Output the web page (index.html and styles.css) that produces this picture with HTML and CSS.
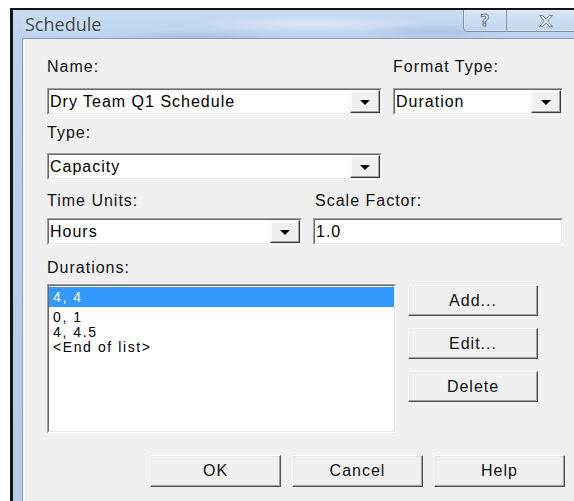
FILE: index.html
```html
<!DOCTYPE html>
<html lang="en">
<head>
<meta charset="utf-8">
<title>Schedule</title>
<link rel="stylesheet" href="styles.css">
</head>
<body>
<div class="window">
  <div class="titlebar">
    <span class="title">Schedule</span>
    <div class="caption-buttons">
      <span class="cap-btn help">?</span>
      <span class="cap-btn close">
        <svg width="16" height="14" viewBox="0 0 16 14" aria-hidden="true">
          <path d="M1.5 1.5h3.2L8 5.2l3.3-3.7h3.2L9.6 7l4.9 5.5h-3.2L8 8.8l-3.3 3.7H1.5L6.4 7z" fill="#eef3fa" stroke="#6f7f96" stroke-width="1" stroke-linejoin="round"/>
        </svg>
      </span>
    </div>
  </div>
  <div class="frame">
    <div class="client">
      <div class="row row-name">
        <div class="field col-name">
          <div class="lbl">Name:</div>
          <div class="combo">
            <div class="combo-inner">
              <span class="combo-text">Dry Team Q1 Schedule</span>
              <span class="drop"><i class="arrow"></i></span>
            </div>
          </div>
        </div>
        <div class="field col-format">
          <div class="lbl">Format Type:</div>
          <div class="combo">
            <div class="combo-inner">
              <span class="combo-text">Duration</span>
              <span class="drop"><i class="arrow"></i></span>
            </div>
          </div>
        </div>
      </div>

      <div class="row row-type">
        <div class="field col-name">
          <div class="lbl">Type:</div>
          <div class="combo">
            <div class="combo-inner">
              <span class="combo-text">Capacity</span>
              <span class="drop"><i class="arrow"></i></span>
            </div>
          </div>
        </div>
      </div>

      <div class="row row-units">
        <div class="field col-units">
          <div class="lbl">Time Units:</div>
          <div class="combo">
            <div class="combo-inner">
              <span class="combo-text">Hours</span>
              <span class="drop"><i class="arrow"></i></span>
            </div>
          </div>
        </div>
        <div class="field col-scale">
          <div class="lbl lbl-scale">Scale Factor:</div>
          <div class="combo">
            <div class="combo-inner">
              <span class="combo-text">1.0</span>
            </div>
          </div>
        </div>
      </div>

      <div class="row-durations">
        <div class="lbl">Durations:</div>
        <div class="durations-body">
          <div class="listbox">
            <div class="listbox-inner">
              <div class="item sel">4, 4</div>
              <div class="item">0, 1</div>
              <div class="item">4, 4.5</div>
              <div class="item">&lt;End of list&gt;</div>
            </div>
          </div>
          <div class="side-buttons">
            <button class="btn">Add...</button>
            <button class="btn">Edit...</button>
            <button class="btn">Delete</button>
          </div>
        </div>
      </div>

      <div class="actions">
        <button class="btn">OK</button>
        <button class="btn">Cancel</button>
        <button class="btn">Help</button>
      </div>
    </div>
  </div>
</div>
</body>
</html>
```

FILE: styles.css
```css
html, body {
  margin: 0;
  padding: 0;
  width: 574px;
  height: 501px;
  overflow: hidden;
  background: #ffffff;
}

/* dialog window with an Aero-style glass frame */
.window {
  margin: 8px 0 0 10px;
  width: 580px;
  height: 491px;
  border-top: 2px solid #151515;
  border-left: 3px solid #151515;
  display: flex;
  flex-direction: column;
  background:
    radial-gradient(ellipse 90px 10px at 180px 30px, rgba(140, 165, 200, 0.55), transparent),
    radial-gradient(ellipse 70px 8px at 420px 22px, rgba(150, 175, 210, 0.5), transparent),
    radial-gradient(ellipse 120px 9px at 300px 14px, rgba(255, 255, 255, 0.45), transparent),
    linear-gradient(to bottom, #c8dbf2 0, #bcd2ee 28px, #b3cbea 100%);
}

.titlebar {
  height: 28px;
  display: flex;
  align-items: flex-start;
  padding-left: 12px;
}

.title {
  font-family: "Open Sans", "Noto Sans", sans-serif;
  font-size: 18px;
  line-height: 28px;
  color: #3e4652;
  text-shadow: 0 0 6px rgba(255, 255, 255, 0.8);
}

.caption-buttons {
  margin-left: auto;
  margin-right: 13px;
  display: flex;
  height: 21px;
  border: 1px solid #7d8ea6;
  border-top: none;
  border-radius: 0 0 5px 5px;
  background: linear-gradient(to bottom, rgba(230, 238, 248, 0.5), rgba(200, 216, 238, 0.4));
  box-shadow: inset 0 0 0 1px rgba(255, 255, 255, 0.35);
}

.cap-btn {
  display: flex;
  align-items: center;
  justify-content: center;
}

.cap-btn.help {
  width: 42px;
  border-right: 1px solid #8797ae;
  font-family: "DejaVu Sans", sans-serif;
  font-weight: bold;
  font-size: 16px;
  color: #f1f5fb;
  -webkit-text-stroke: 1px #6f7f96;
}

.cap-btn.close {
  width: 72px;
  justify-content: flex-start;
  padding-left: 31px;
  box-sizing: border-box;
}

.frame {
  flex: 1;
  display: flex;
  padding-left: 9px;
}

.client {
  flex: 1;
  border-left: 1px solid #8798b0;
  border-top: 1px solid #8798b0;
  background: #f0f0f0;
  padding: 19px 0 0 24px;
  box-shadow: inset 2px 0 0 #f6f8fb;
  font-family: "Liberation Sans", Arial, sans-serif;
  font-size: 16px;
  letter-spacing: 1px;
  color: #111;
}

.row {
  display: flex;
  gap: 11px;
}

.lbl {
  height: 18px;
  line-height: 18px;
  white-space: nowrap;
}

.col-name { width: 335px; }
.col-format { width: 170px; }
.col-units { width: 255px; }
.col-scale { width: 250px; }

.lbl-scale { padding-left: 2px; }

.row-name .lbl { margin-bottom: 12px; }
.row-type { margin-top: 9px; }
.row-type .lbl { margin-bottom: 11px; }
.row-units { margin-top: 12px; }
.row-units .lbl { margin-bottom: 8px; }
.row-durations { margin-top: 14px; }
.row-durations > .lbl { margin-bottom: 7px; }

/* sunken edit / combo box */
.combo {
  height: 27px;
  box-sizing: border-box;
  border: 1px solid;
  border-color: #a0a0a0 #ffffff #ffffff #a0a0a0;
}

.combo-inner {
  height: 100%;
  box-sizing: border-box;
  border: 1px solid;
  border-color: #6a6a6a #e6e6e6 #e6e6e6 #6a6a6a;
  background: #ffffff;
  display: flex;
  align-items: center;
}

.combo-text {
  flex: 1;
  padding-left: 1px;
  line-height: 18px;
  color: #000;
  white-space: nowrap;
  overflow: hidden;
}

.drop {
  width: 30px;
  height: 100%;
  box-sizing: border-box;
  border: 1px solid;
  border-color: #f4f4f4 #404040 #404040 #f4f4f4;
  box-shadow: inset -1px -1px 0 #a0a0a0, inset 1px 1px 0 #ffffff;
  background: #f0f0f0;
  display: flex;
  align-items: center;
  justify-content: center;
}

.arrow {
  width: 0;
  height: 0;
  border-left: 5px solid transparent;
  border-right: 5px solid transparent;
  border-top: 5px solid #000;
  margin-top: 1px;
}

.durations-body {
  display: flex;
  gap: 12px;
}

.listbox {
  width: 349px;
  height: 149px;
  box-sizing: border-box;
  border: 1px solid;
  border-color: #a0a0a0 #ffffff #ffffff #a0a0a0;
}

.listbox-inner {
  height: 100%;
  box-sizing: border-box;
  border: 1px solid;
  border-color: #6a6a6a #e6e6e6 #e6e6e6 #6a6a6a;
  background: #ffffff;
  padding-top: 1px;
}

.item {
  font-size: 14px;
  line-height: 15px;
  letter-spacing: 1.6px;
  padding-left: 4px;
  color: #000;
  white-space: nowrap;
}

.item.sel {
  background: #3399ff;
  color: #ffffff;
  line-height: 20px;
  margin-bottom: 3px;
}

.side-buttons {
  width: 130px;
  display: flex;
  flex-direction: column;
  gap: 12px;
  padding-top: 1px;
}

/* raised push button */
.btn {
  height: 31px;
  box-sizing: border-box;
  border: 1px solid;
  border-color: #ffffff #505050 #505050 #ffffff;
  box-shadow: inset -1px -1px 0 #a0a0a0, inset 1px 1px 0 #e6e6e6;
  background: #f0f0f0;
  font-family: "Liberation Sans", Arial, sans-serif;
  font-size: 16px;
  letter-spacing: 1px;
  color: #111;
  padding: 0;
}

.actions {
  display: flex;
  gap: 11px;
  margin: 22px 0 0 103px;
}

.actions .btn {
  width: 131px;
  height: 32px;
}
```
